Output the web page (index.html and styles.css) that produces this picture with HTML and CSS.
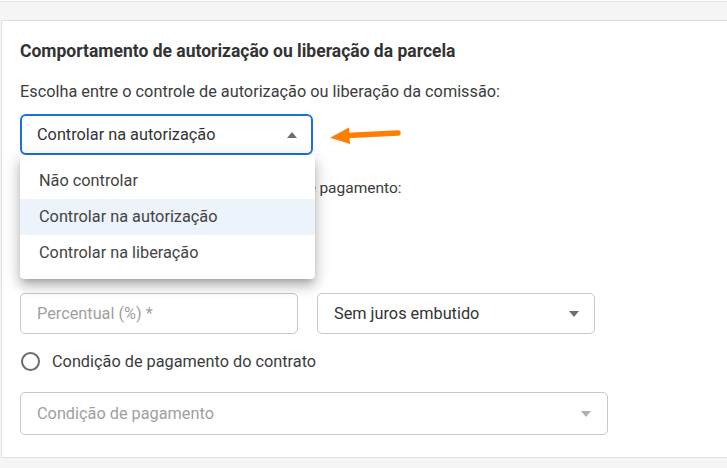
FILE: index.html
```html
<!DOCTYPE html>
<html lang="pt-BR">
<head>
<meta charset="utf-8">
<title>Comportamento</title>
<link rel="stylesheet" href="styles.css">
</head>
<body>
<div class="topbar"></div>
<section class="card">
  <h2 class="title">Comportamento de autorização ou liberação da parcela</h2>
  <p class="label">Escolha entre o controle de autorização ou liberação da comissão:</p>
  <div class="select-wrap">
    <div class="select focused">
      <span class="value">Controlar na autorização</span>
      <span class="caret up"></span>
    </div>
    <svg class="pointer" width="74" height="22" viewBox="0 0 74 22">
      <path d="M18 12.5 L69 10" stroke="#ff8000" stroke-width="5.5" stroke-linecap="round" fill="none"/>
      <path d="M1 14.7 L20 4.5 L21 21 Z" fill="#ff8000"/>
    </svg>
    <ul class="menu">
      <li class="item">Não controlar</li>
      <li class="item selected">Controlar na autorização</li>
      <li class="item">Controlar na liberação</li>
    </ul>
  </div>
  <p class="label label2">Escolha entre percentual fixo e condição de pagamento:</p>
  <label class="radio"><span class="circle"></span><span>Percentual fixo</span></label>
  <p class="label label3">Condição de pagamento</p>
  <div class="row">
    <div class="field"><span class="placeholder">Percentual (%) *</span></div>
    <div class="field"><span class="value">Sem juros embutido</span><span class="caret down"></span></div>
  </div>
  <label class="radio radio2"><span class="circle"></span><span>Condição de pagamento do contrato</span></label>
  <div class="field wide"><span class="placeholder">Condição de pagamento</span><span class="caret down light"></span></div>
</section>
</body>
</html>
```

FILE: styles.css
```css
* { box-sizing: border-box; }
html, body { margin: 0; padding: 0; }
body {
  background: #f5f5f5;
  font-family: Roboto, "Noto Sans", Arial, sans-serif;
  color: #333;
  width: 727px;
  height: 468px;
  overflow: hidden;
}
.topbar {
  height: 2px;
  background: #fff;
  border-bottom: 1px solid #e2e2e2;
}
.card {
  margin: 18px 0 0 1px;
  width: 740px;
  height: 438px;
  background: #fff;
  border: 1px solid #e0e0e0;
  padding: 19px 18px 0 18px;
}
.title {
  margin: 0;
  font-size: 17.5px;
  line-height: 22px;
  font-weight: 700;
  color: #333;
}
.label {
  margin: 20px 0 0 0;
  font-size: 16.3px;
  line-height: 20px;
  color: #3c3c3c;
}
.select-wrap {
  position: relative;
  margin-top: 12px;
  width: 293px;
}
.select, .field {
  display: flex;
  align-items: center;
  justify-content: space-between;
  height: 41px;
  border: 1px solid #c8c8c8;
  border-radius: 5px;
  padding: 0 15px 0 16px;
  font-size: 16.3px;
  background: #fff;
}
.select.focused {
  border: 2px solid #1a73d9;
  border-radius: 6px;
  padding-left: 15px;
  padding-right: 14px;
}
.value { color: #333; }
.placeholder { color: #a0a0a0; }
.caret {
  width: 0;
  height: 0;
  border-left: 5.5px solid transparent;
  border-right: 5.5px solid transparent;
}
.caret.up { border-bottom: 6px solid #6e6e6e; }
.caret.down { border-top: 6px solid #6e6e6e; }
.caret.down.light { border-top-color: #b0b0b0; }
.pointer {
  position: absolute;
  left: 309px;
  top: 9px;
}
.menu {
  position: absolute;
  top: 41px;
  left: 0;
  width: 295px;
  margin: 0;
  padding: 8px 0;
  list-style: none;
  background: #fff;
  border-radius: 4px;
  box-shadow: 0 5px 6px -3px rgba(0,0,0,0.2), 0 8px 12px 1px rgba(0,0,0,0.14), 0 3px 16px 2px rgba(0,0,0,0.12);
  z-index: 10;
}
.item {
  height: 36px;
  line-height: 36px;
  padding-left: 19px;
  font-size: 16.3px;
  color: #444;
}
.item.selected { background: #edf3fb; }
.label2 { margin-top: 23px; font-size: 15.5px; word-spacing: -0.5px; }
.radio {
  display: flex;
  align-items: center;
  gap: 12px;
  height: 24px;
  margin-top: 15px;
  font-size: 16.3px;
  color: #3c3c3c;
}
.circle {
  width: 19px;
  height: 19px;
  border: 2px solid #6b6b6b;
  border-radius: 50%;
  margin-left: 1px;
}
.label3 { margin-top: 24px; }
.row {
  display: flex;
  gap: 19px;
  margin-top: 12px;
}
.row .field { width: 278px; }
.radio2 { margin-top: 15px; }
.field.wide {
  width: 588px;
  height: 43px;
  margin-top: 19px;
  padding-right: 16px;
}
```
